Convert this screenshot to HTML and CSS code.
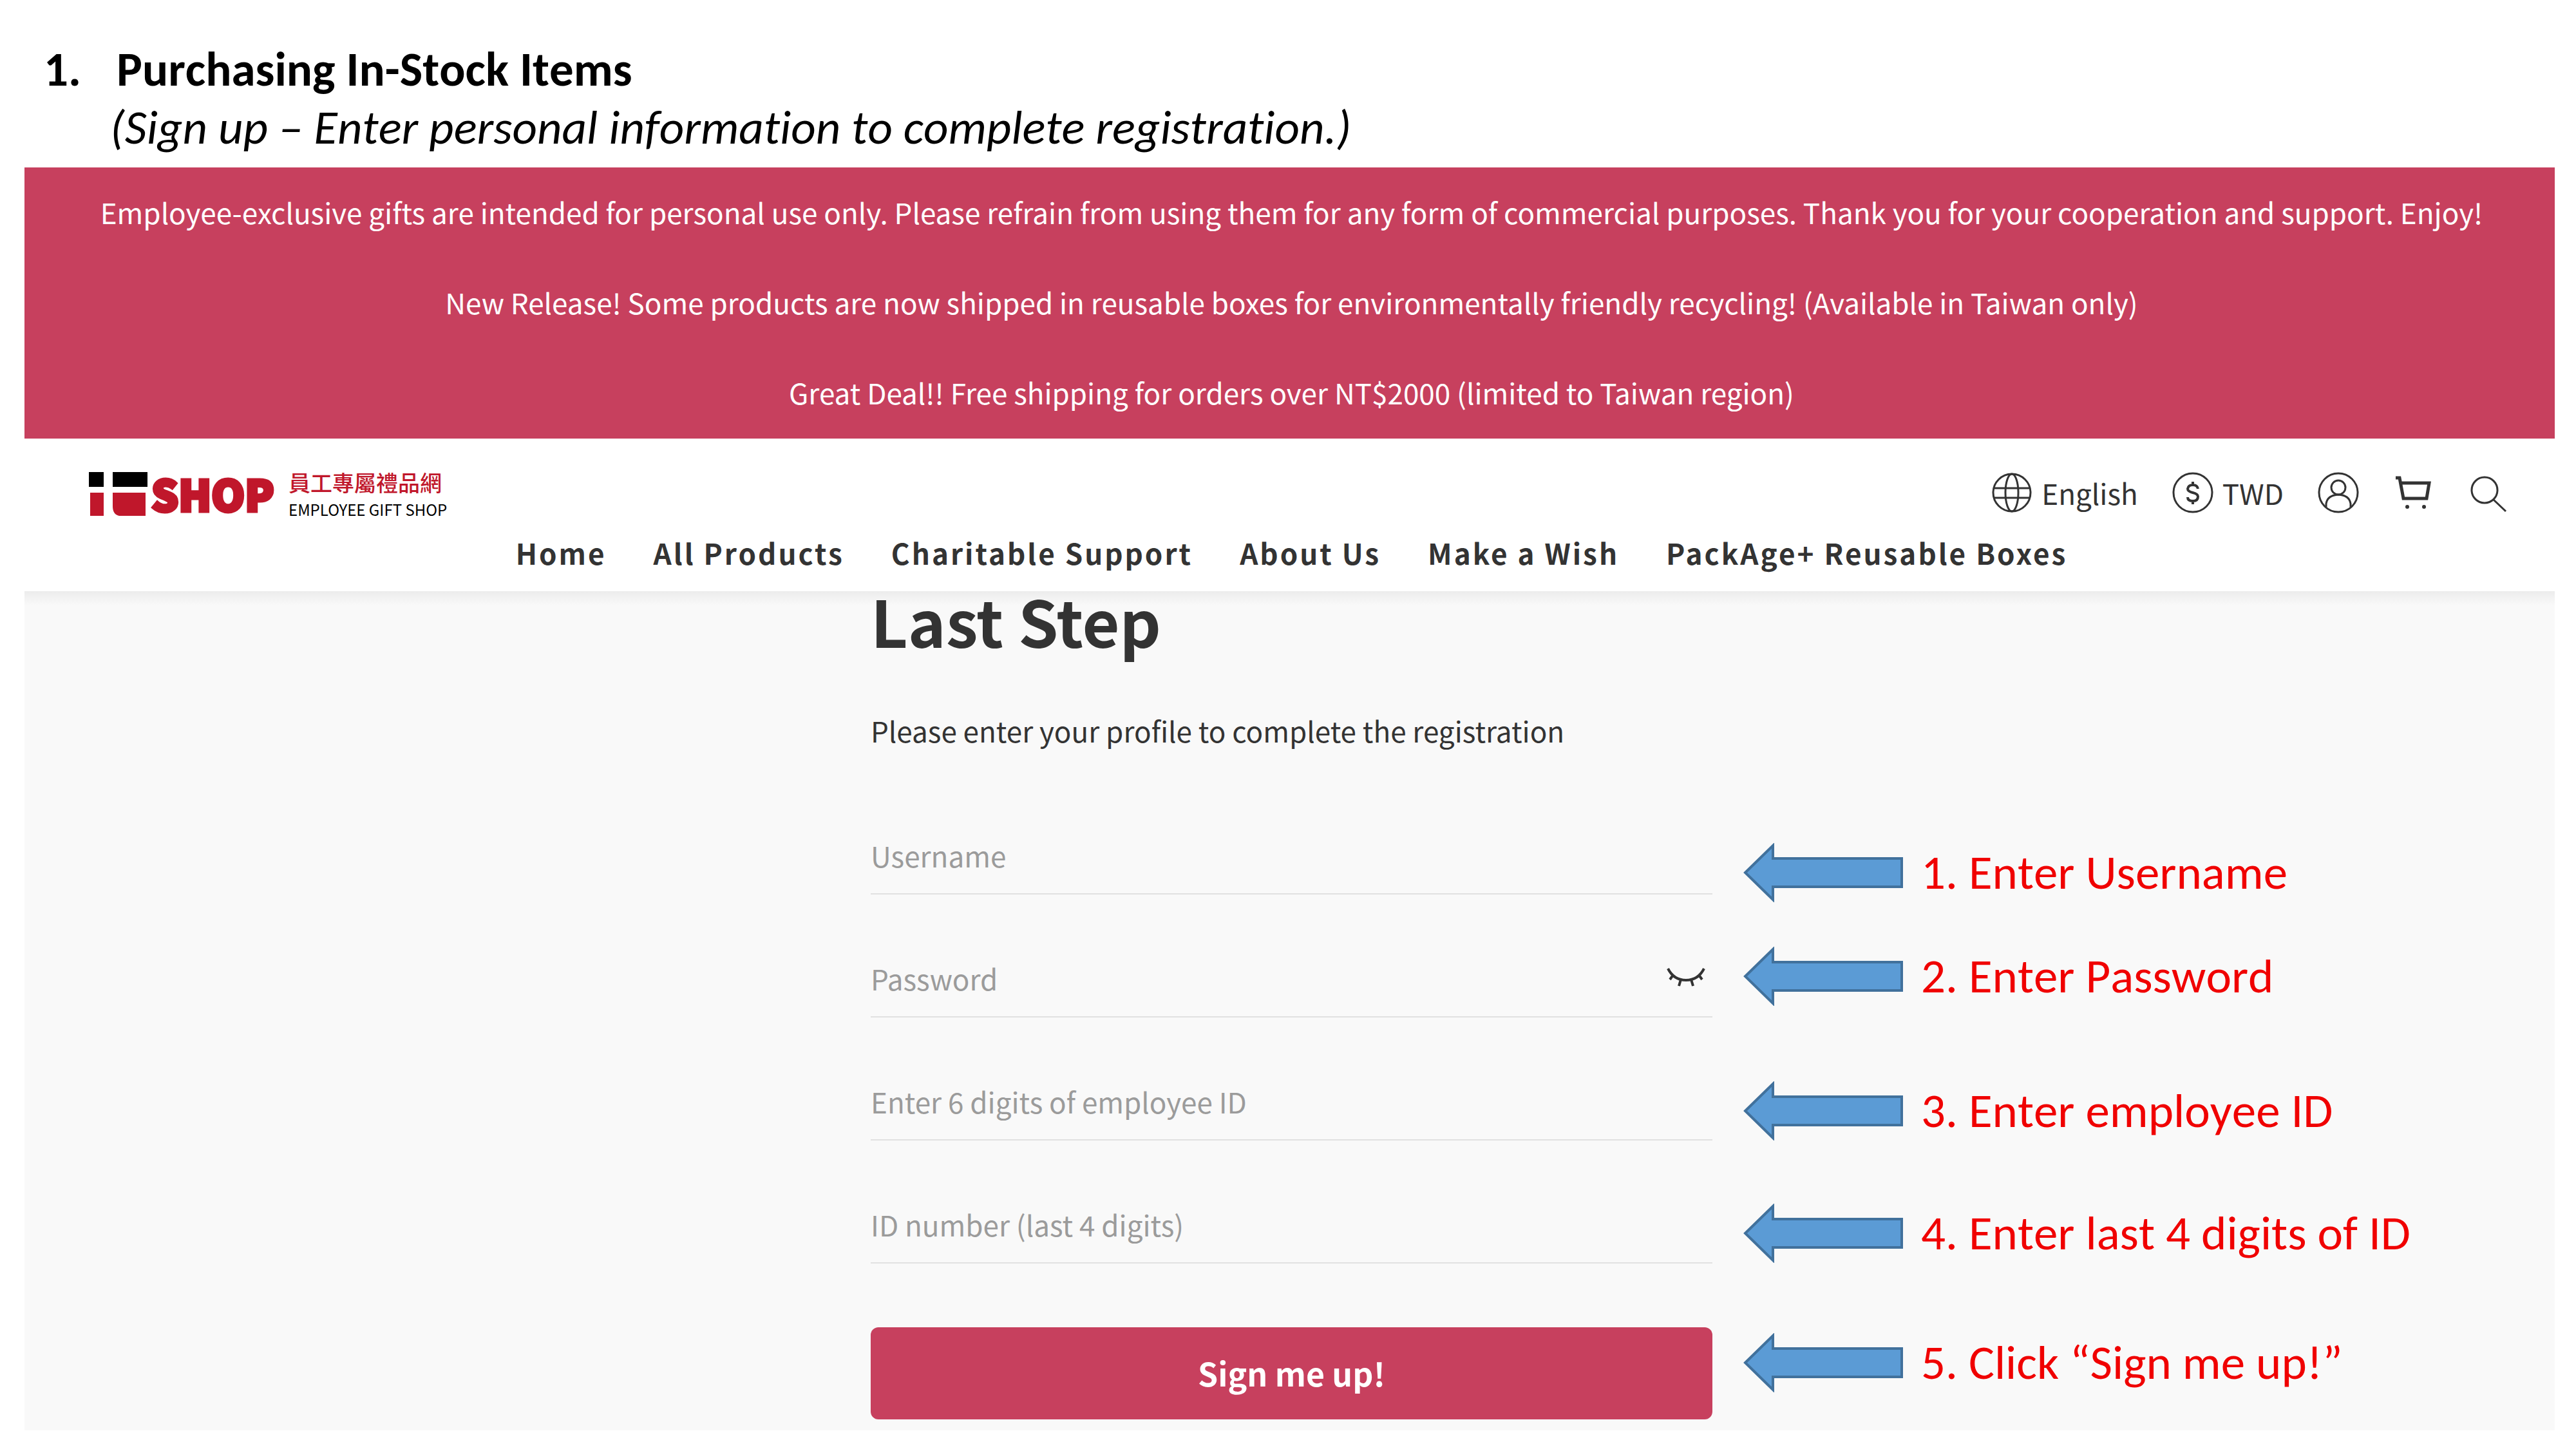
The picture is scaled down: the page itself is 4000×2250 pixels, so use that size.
FILE: index.html
```html
<!DOCTYPE html>
<html lang="en">
<head>
  <meta charset="UTF-8" />
  <meta name="viewport" content="width=device-width, initial-scale=1.0"/>
  <title>Purchasing In-Stock Items</title>
  <link rel="stylesheet" href="styles.css">
</head>
<body>
  <div class="guide-title">
    <h1><span class="num">1.</span>Purchasing In-Stock Items</h1>
    <p>(Sign up – Enter personal information to complete registration.)</p>
  </div>

  <div class="site">
    <div class="banner">
      <p>Employee-exclusive gifts are intended for personal use only. Please refrain from using them for any form of commercial purposes. Thank you for your cooperation and support. Enjoy!</p>
      <p>New Release! Some products are now shipped in reusable boxes for environmentally friendly recycling! (Available in Taiwan only)</p>
      <p>Great Deal!! Free shipping for orders over NT$2000 (limited to Taiwan region)</p>
    </div>

    <header class="header">
      <div class="topbar">
        <a class="logo" href="#">
          <svg class="logo-mark" viewBox="0 0 91 68" aria-hidden="true">
            <path fill="#000" d="M0 0h23v23H0zM37 0h54v23H37z"/>
            <path fill="#c0172b" d="M2 32h21v36H2zM37 32h51v36H47q-10-2-10-15z"/>
          </svg>
          <span class="logo-shop">SHOP</span>
          <span class="logo-sub">
            <span class="zh" lang="zh-Hant">員工專屬禮品網</span>
            <span class="en">EMPLOYEE GIFT SHOP</span>
          </span>
        </a>
        <div class="tools">
          <button type="button" class="tool">
            <svg viewBox="0 0 64 64"><circle cx="32" cy="32" r="29"/><ellipse cx="32" cy="32" rx="10" ry="29"/><path d="M4 25h56M4 40h56"/></svg>
            English
          </button>
          <button type="button" class="tool">
            <svg viewBox="0 0 64 64"><circle cx="32" cy="32" r="30"/><path class="dollar" d="M40 26q-1-6-8-6t-8 6q0 4 8 6t8 6q0 7-8 7t-8-6M32 15v5M32 45v5"/></svg>
            TWD
          </button>
          <button type="button" class="tool" aria-label="Account">
            <svg viewBox="0 0 64 64"><circle cx="32" cy="32" r="30"/><circle cx="32" cy="24" r="11"/><path d="M13 54v-5q2-13 19-14 17 1 19 14v5"/></svg>
          </button>
          <button type="button" class="tool" aria-label="Cart">
            <svg viewBox="0 0 64 64"><path class="bold" d="M4 9h6l6 32h36l4-24H12"/><circle class="dot" cx="22" cy="54" r="3"/><circle class="dot" cx="48" cy="54" r="3"/></svg>
          </button>
          <button type="button" class="tool" aria-label="Search">
            <svg viewBox="0 0 64 64"><circle cx="25" cy="28" r="20"/><path d="M39 43l19 18"/></svg>
          </button>
        </div>
      </div>
      <nav class="nav">
        <a href="#">Home</a>
        <a href="#">All Products</a>
        <a href="#">Charitable Support</a>
        <a href="#">About Us</a>
        <a href="#">Make a Wish</a>
        <a href="#">PackAge+ Reusable Boxes</a>
      </nav>
    </header>

    <main class="main">
      <form class="signup">
        <h2>Last Step</h2>
        <p class="intro">Please enter your profile to complete the registration</p>
        <div class="field"><input type="text" name="username" placeholder="Username" aria-label="Username"></div>
        <div class="field">
          <input type="password" name="password" placeholder="Password" aria-label="Password">
          <button type="button" class="eye" aria-label="Show password">
            <svg viewBox="0 0 60 32"><path d="M2 3q9 18 28 18T58 3M10 13l-5 7M50 13l5 7M22 20l-3 10M38 20l3 10"/></svg>
          </button>
        </div>
        <div class="field"><input type="text" name="employee_id" placeholder="Enter 6 digits of employee ID" aria-label="Enter 6 digits of employee ID"></div>
        <div class="field"><input type="text" name="id_last4" placeholder="ID number (last 4 digits)" aria-label="ID number (last 4 digits)"></div>
        <button type="submit" class="submit">Sign me up!</button>
      </form>

      <ol class="steps">
        <li><svg viewBox="0 0 248 92"><path d="M3 46L46 4v20h200v44H46v20z"/></svg>1. Enter Username</li>
        <li><svg viewBox="0 0 248 92"><path d="M3 46L46 4v20h200v44H46v20z"/></svg>2. Enter Password</li>
        <li><svg viewBox="0 0 248 92"><path d="M3 46L46 4v20h200v44H46v20z"/></svg>3. Enter employee ID</li>
        <li><svg viewBox="0 0 248 92"><path d="M3 46L46 4v20h200v44H46v20z"/></svg>4. Enter last 4 digits of ID</li>
        <li><svg viewBox="0 0 248 92"><path d="M3 46L46 4v20h200v44H46v20z"/></svg>5. Click “Sign me up!”</li>
      </ol>
    </main>
  </div>
</body>
</html>
```
FILE: styles.css
```css
*{box-sizing:border-box;}
body{margin:0;background:#fff;color:#333;font-family:"Noto Sans CJK TC","Noto Sans",sans-serif;font-size:44px;line-height:66px;}
h1,h2,p,ol{margin:0;padding:0;}
a{color:inherit;text-decoration:none;}
button{border:none;background:none;padding:0;color:inherit;font:inherit;cursor:pointer;}
svg{display:block;flex:none;}

/* Guide text */
.guide-title,.steps{font-family:Calibri,Carlito,Lato,sans-serif;font-size:75px;font-kerning:none;font-variant-ligatures:none;}
.guide-title{padding:63px 68px 17px;color:#000;line-height:90px;}
.guide-title h1{display:flex;font-size:75px;font-weight:700;}
.guide-title .num{width:113px;}
.guide-title p{padding-left:103px;font-style:italic;}

.site{margin:0 33px 0 38px;}

/* Banner */
.banner{display:flex;flex-direction:column;gap:84px;padding:41px 0 44px 6px;background:#c7405e;color:#fff;text-align:center;line-height:56px;}

/* Header */
.topbar{display:flex;justify-content:space-between;align-items:center;height:120px;padding:52px 70px 0 100px;}
.logo{display:flex;align-items:flex-start;height:68px;}
.logo-mark{width:91px;height:68px;}
.logo-shop{width:213px;margin-left:6px;color:#c0172b;font-size:66px;font-weight:900;line-height:64px;-webkit-text-stroke:5px #c0172b;}
.logo-sub{display:flex;flex-direction:column;gap:9px;}
.logo-sub .zh{color:#c0172b;font-size:34px;font-weight:500;line-height:32px;}
.logo-sub .en{color:#000;font-size:24px;line-height:33px;}
.tools{display:flex;align-items:center;gap:53px;padding-bottom:4px;}
.tool{display:flex;align-items:center;gap:14px;}
.tool svg{width:64px;height:64px;fill:none;stroke:#333;stroke-width:3;}
.tool .bold{stroke-width:5;}
.tool .dollar{stroke-width:4;}
.tool .dot{fill:#333;stroke:none;}
.nav{display:flex;justify-content:center;gap:73px;padding:2px 0 5px 6px;font-weight:700;line-height:110px;letter-spacing:3px;}

/* Sign up form */
.main{display:grid;grid-template-columns:1fr 1307px 1308px;background:#f9f9f9 linear-gradient(#ececec,#f9f9f9) 0 0/100% 22px no-repeat;}
.signup{grid-column:2;padding-bottom:17px;}
.signup h2{font-size:100px;line-height:90px;}
.intro{margin:93px 0 127px;}
.field{display:flex;align-items:flex-start;height:95px;margin-bottom:96px;border-bottom:2px solid #e1e1e1;}
.field input{flex:1;height:68px;padding:0;border:none;outline:none;background:none;color:#333;font:inherit;}
.field input::placeholder{color:#9b9b9b;opacity:1;}
.eye{padding:16px 11px 0 0;}
.eye svg{width:60px;height:32px;fill:none;stroke:#333;stroke-width:4;}
.submit{display:block;width:100%;height:143px;margin-top:99px;padding-bottom:4px;border-radius:12px;background:#c7405e;color:#fff;font-size:50px;font-weight:700;}

/* Steps beside the form */
.steps{display:grid;grid-template-rows:161px 209px 190px 201px 92px;align-content:start;padding:391px 0 0 48px;list-style:none;color:#f00000;}
.steps li{display:flex;align-items:center;gap:28px;height:92px;}
.steps svg{width:248px;height:92px;fill:#5b9bd5;stroke:#41719c;stroke-width:4;}
```
